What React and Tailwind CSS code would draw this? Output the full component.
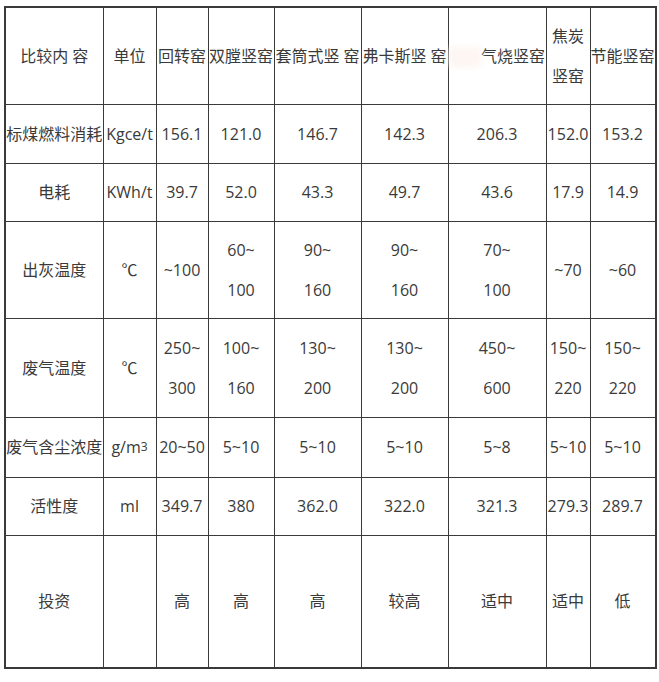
import React from "react";

const cols = [98, 53, 52, 66, 87, 87, 98, 44, 64];

const rows = [
  {
    h: "h-[97px]",
    cells: [
      "比较内 容",
      "单位",
      "回转窑",
      "双膛竖窑",
      "套筒式竖 窑",
      "弗卡斯竖 窑",
      "GAS",
      ["焦炭", "竖窑"],
      "节能竖窑",
    ],
  },
  {
    h: "h-[59px]",
    cells: ["标煤燃料消耗", "Kgce/t", "156.1", "121.0", "146.7", "142.3", "206.3", "152.0", "153.2"],
  },
  {
    h: "h-[58px]",
    cells: ["电耗", "KWh/t", "39.7", "52.0", "43.3", "49.7", "43.6", "17.9", "14.9"],
  },
  {
    h: "h-[97px]",
    cells: ["出灰温度", "℃", "~100", ["60~", "100"], ["90~", "160"], ["90~", "160"], ["70~", "100"], "~70", "~60"],
  },
  {
    h: "h-[99px]",
    cells: ["废气温度", "℃", ["250~", "300"], ["100~", "160"], ["130~", "200"], ["130~", "200"], ["450~", "600"], ["150~", "220"], ["150~", "220"]],
  },
  {
    h: "h-[60px]",
    cells: ["废气含尘浓度", "SUP", "20~50", "5~10", "5~10", "5~10", "5~8", "5~10", "5~10"],
  },
  {
    h: "h-[58px]",
    cells: ["活性度", "ml", "349.7", "380", "362.0", "322.0", "321.3", "279.3", "289.7"],
  },
  {
    h: "h-[133px]",
    cells: ["投资", "", "高", "高", "高", "较高", "适中", "适中", "低"],
  },
];

function Cell({ v }) {
  if (Array.isArray(v)) {
    return (
      <>
        {v.map((t, i) => (
          <div key={i} className="whitespace-nowrap">{t}</div>
        ))}
      </>
    );
  }
  if (v === "SUP") {
    return (
      <span className="whitespace-nowrap">
        g/m<sup className="text-[12px] relative -top-[2px]">3</sup>
      </span>
    );
  }
  if (v === "GAS") {
    return (
      <span className="whitespace-nowrap">
        <span className="inline-block w-[32px] h-[20px] align-middle bg-[#fdf6f2] blur-[3px] rounded"></span>
        气烧竖窑
      </span>
    );
  }
  return <span className="whitespace-nowrap">{v}</span>;
}

export default function App() {
  return (
    <div
      className="w-[659px] h-[682px] bg-white pt-[6px] pl-[4px]"
      style={{ fontFamily: '"Open Sans", "Noto Sans CJK SC", sans-serif' }}
    >
      <table className="table-fixed border-collapse border-2 border-[#3a3a3a] text-[16px] leading-[40px] text-[#3a3a3a]">
        <colgroup>
          {cols.map((w, i) => (
            <col key={i} style={{ width: w }} />
          ))}
        </colgroup>
        <tbody>
          {rows.map((r, ri) => (
            <tr key={ri} className={r.h}>
              {r.cells.map((c, ci) => (
                <td
                  key={ci}
                  className="border-[1.5px] border-[#3a3a3a] p-0 text-center align-middle"
                >
                  <Cell v={c} />
                </td>
              ))}
            </tr>
          ))}
        </tbody>
      </table>
    </div>
  );
}
